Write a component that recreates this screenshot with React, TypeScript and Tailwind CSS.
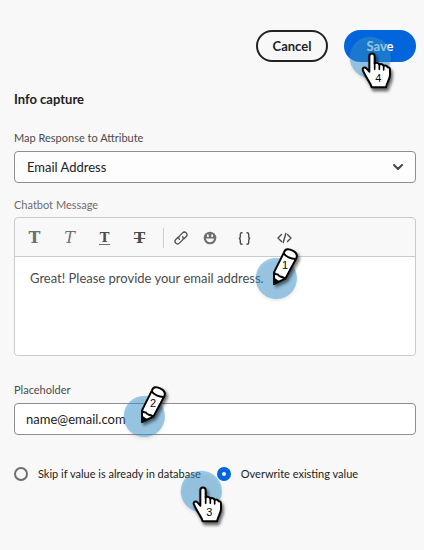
import type { ReactNode } from "react";

function Spot() {
  return (
    <circle
      cx="64"
      cy="64"
      r="62"
      fill="rgba(55,150,210,0.47)"
      style={{ filter: "drop-shadow(0 6px 5px rgba(0,0,0,0.18))" }}
    />
  );
}

function HandMarker({ step, className }: { step: number; className: string }) {
  return (
    <svg
      viewBox="0 0 129 129"
      aria-hidden="true"
      className={`pointer-events-none absolute z-10 h-[43px] w-[43px] overflow-visible ${className}`}
    >
      <Spot />
      <g style={{ filter: "drop-shadow(5px 9px 5px rgba(0,0,0,0.6))" }}>
        <path
          d="M61 103V61c0-11 16-11 16 0v22c4-4 12-3 14 3 4-3 11-2 13 4 4-3 10-1 12 4 5-1 7 3 7 8v15c0 11-9 22-12 37H68c-2-9-7-16-12-24-5-9-9-15-14-26-4-9 6-12 11-6l8 9z"
          fill="#fff"
          stroke="#050505"
          strokeWidth="6"
          strokeLinejoin="round"
        />
        <path d="M77 80v20M91 86v14M104 90v12" fill="none" stroke="#050505" strokeWidth="5" strokeLinecap="round" />
      </g>
      <text x="88" y="138" textAnchor="middle" fontSize="33" fill="#050505" className="font-['Liberation_Sans',sans-serif]">
        {step}
      </text>
    </svg>
  );
}

function PencilMarker({ step, className }: { step: number; className: string }) {
  return (
    <svg
      viewBox="0 0 129 129"
      aria-hidden="true"
      className={`pointer-events-none absolute z-10 h-[43px] w-[43px] overflow-visible ${className}`}
    >
      <Spot />
      <g style={{ filter: "drop-shadow(6px 7px 5px rgba(0,0,0,0.55))" }}>
        <path
          d="M57 81V46L87-14c4-12 15-11 26-5 10 5 16 11 11 23L91 65z"
          fill="#fff"
          stroke="#050505"
          strokeWidth="6"
          strokeLinejoin="round"
        />
        <path d="M86-11c6 10 22 17 35 17M57 46c3 8 8 5 12 7 4 8 9 4 22 12" fill="none" stroke="#050505" strokeWidth="6" />
        <path d="M56 61l16 11-16 12z" fill="#050505" />
      </g>
      <text x="90" y="37" textAnchor="middle" fontSize="33" fill="#050505" className="font-['Liberation_Sans',sans-serif]">
        {step}
      </text>
    </svg>
  );
}

function Tool({ label, className, children }: { label: string; className: string; children: ReactNode }) {
  return (
    <button type="button" aria-label={label} className={`flex h-8 items-center justify-center text-[#4b4b4b] ${className}`}>
      {children}
    </button>
  );
}

export default function App() {
  return (
    <main className="min-h-[550px] bg-[#f8f8f8] pt-[30px] pr-2 pl-[14px] font-['Lato',sans-serif] text-xs leading-4 text-[#222]">
      <div className="flex justify-end gap-4">
        <button type="button" className="h-8 w-[72px] rounded-full border-2 border-[#222] text-[13px] font-bold">
          Cancel
        </button>
        <div className="relative">
          <button type="button" className="h-8 w-[72px] rounded-full bg-[#0265dc] text-[13px] font-bold text-white">
            Save
          </button>
          <HandMarker step={4} className="top-[6px] left-[5px]" />
        </div>
      </div>

      <h1 className="mt-[29px] text-[13px] leading-4 font-bold">Info capture</h1>

      <label htmlFor="attribute" className="mt-[23px] block text-[11px] text-[#4b4b4b]">
        Map Response to Attribute
      </label>
      <div className="relative mt-[5px]">
        <select
          id="attribute"
          className="h-8 w-full appearance-none rounded border border-[#8f8f8f] bg-[#fdfdfd] px-3 text-[13px]"
        >
          <option>Email Address</option>
        </select>
        <svg
          viewBox="0 0 10 6"
          aria-hidden="true"
          className="pointer-events-none absolute top-[13px] right-[13px] h-[6px] w-[10px]"
        >
          <path d="M1 1l4 4 4-4" fill="none" stroke="#464646" strokeWidth="2" strokeLinecap="round" strokeLinejoin="round" />
        </svg>
      </div>

      <label htmlFor="message" className="mt-[14px] block text-[11px] text-[#6e6e6e]">
        Chatbot Message
      </label>
      <div className="relative mt-1 rounded border border-[#cacaca]">
        <div className="flex h-[39px] items-center border-b border-[#cacaca] pt-[2px] pl-[2px]">
          <Tool label="Bold" className="w-[35px]">
            <span className="font-['DejaVu_Serif',serif] text-base leading-4 font-bold text-[#6e6e6e]">T</span>
          </Tool>
          <Tool label="Italic" className="w-[35px]">
            <span className="font-['DejaVu_Serif',serif] text-base leading-4 text-[#6e6e6e] italic">T</span>
          </Tool>
          <Tool label="Underline" className="w-[35px]">
            <span className="border-b border-[#6e6e6e] px-px font-['DejaVu_Serif',serif] text-[13px] leading-3 font-bold">T</span>
          </Tool>
          <Tool label="Strikethrough" className="w-[35px]">
            <span className="font-['DejaVu_Serif',serif] text-[15px] leading-4 font-bold line-through decoration-1">T</span>
          </Tool>
          <span className="mr-[2px] ml-[6px] h-5 w-px bg-[#d0d0d0]" />
          <Tool label="Link" className="w-[29px]">
            <svg viewBox="0 0 14 14" className="h-[14px] w-[14px]" fill="none" stroke="currentColor" strokeWidth="1.3" strokeLinecap="round">
              <path d="M5.4 8.4a2.6 2.6 0 0 1 .2-3.5l3-3a2.5 2.5 0 0 1 3.6 3.6L10 7.7" />
              <path d="M8.6 5.6a2.6 2.6 0 0 1-.2 3.5l-3 3a2.5 2.5 0 0 1-3.6-3.6L4 6.3" />
            </svg>
          </Tool>
          <Tool label="Emoji" className="w-[29px]">
            <svg viewBox="0 0 14 14" className="h-[14px] w-[14px]">
              <circle cx="7" cy="7" r="6.3" fill="#6e6e6e" />
              <path d="M4 3.4h1.7v2.5H4zM8.3 3.4H10v2.5H8.3zM3 7.6h8c-.2 2.2-1.8 3.7-4 3.7S3.2 9.8 3 7.6z" fill="#f8f8f8" />
            </svg>
          </Tool>
          <Tool label="Insert token" className="w-[41px]">
            <svg viewBox="0 0 13 13" className="h-[13px] w-[13px]" fill="none" stroke="currentColor" strokeWidth="1.4">
              <path d="M4.5.8h-.7c-1.1 0-1.500.5-1.500 1.500v2.400c0 1.100-.5 1.800-1.500 1.800 1 0 1.500.7 1.500 1.800v2.400c0 1 .4 1.500 1.500 1.500h.7" />
              <path d="M8.500.8h.7c1.100 0 1.500.5 1.500 1.500v2.400c0 1.100.5 1.800 1.500 1.800-1 0-1.500.7-1.500 1.800v2.400c0 1-.4 1.500-1.500 1.500h-.7" />
            </svg>
          </Tool>
          <Tool label="Code view" className="w-[39px]">
            <svg viewBox="0 0 15 12" className="h-3 w-[15px]" fill="none" stroke="currentColor" strokeWidth="1.4" strokeLinecap="round" strokeLinejoin="round">
              <path d="M4.5 2.5L1 6l3.5 3.5M10.5 2.5L14 6l-3.5 3.5M8.8 1.5L6.2 10.5" />
            </svg>
          </Tool>
        </div>
        <textarea
          id="message"
          defaultValue="Great! Please provide your email address."
          className="block h-[98px] w-full resize-none rounded-b bg-white px-[15px] pt-[13px] text-[13px] leading-4 text-[#4b4b4b] outline-none"
        />
        <PencilMarker step={1} className="top-[39px] left-[240px]" />
      </div>

      <label htmlFor="placeholder" className="mt-[26px] block text-[11px] text-[#4b4b4b]">
        Placeholder
      </label>
      <div className="relative mt-[5px]">
        <input
          id="placeholder"
          type="text"
          defaultValue="name@email.com"
          className="block h-8 w-full rounded border border-[#8f8f8f] bg-white px-[11px] text-[13px] outline-none"
        />
        <PencilMarker step={2} className="top-[-8px] left-[109px]" />
      </div>

      <fieldset className="relative mt-[31px] flex items-center gap-4">
        <label className="flex items-center gap-[10px] text-[11px]">
          <input
            type="radio"
            name="existing"
            className="m-0 h-[14px] w-[14px] appearance-none rounded-full border-2 border-[#6e6e6e] bg-[#f8f8f8] checked:border-[5px] checked:border-[#0265dc]"
          />
          Skip if value is already in database
        </label>
        <label className="flex items-center gap-[10px] text-[11px]">
          <input
            type="radio"
            name="existing"
            defaultChecked
            className="m-0 h-[14px] w-[14px] appearance-none rounded-full border-2 border-[#6e6e6e] bg-[#f8f8f8] checked:border-[5px] checked:border-[#0265dc]"
          />
          Overwrite existing value
        </label>
        <HandMarker step={3} className="top-[4px] left-[166px]" />
      </fieldset>
    </main>
  );
}
